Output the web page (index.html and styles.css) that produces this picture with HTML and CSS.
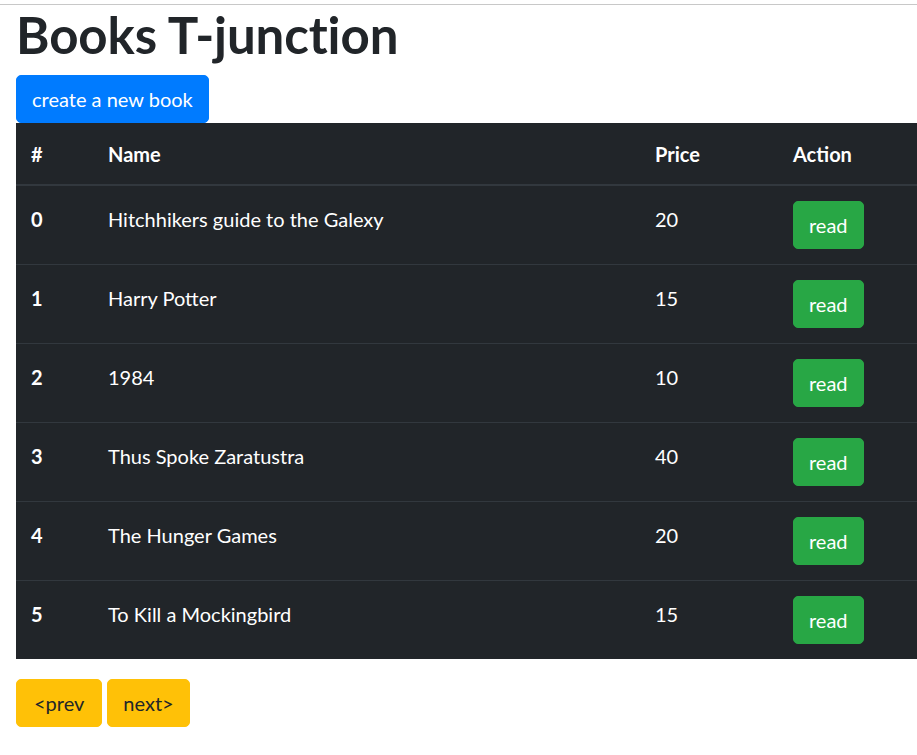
FILE: index.html
```html
<!DOCTYPE html>
<html lang="en">
<head>
<meta charset="utf-8">
<title>Books T-junction</title>
<link rel="stylesheet" href="styles.css">
</head>
<body>
<div class="topline"></div>
<div class="page">
  <h1 class="title">Books T-junction</h1>
  <button class="btn btn-primary">create a new book</button>
  <table class="books">
    <thead>
      <tr>
        <th class="c-id">#</th>
        <th class="c-name">Name</th>
        <th class="c-price">Price</th>
        <th class="c-action">Action</th>
      </tr>
    </thead>
    <tbody>
      <tr><th>0</th><td>Hitchhikers guide to the Galexy</td><td>20</td><td class="act"><button class="btn btn-success">read</button></td></tr>
      <tr><th>1</th><td>Harry Potter</td><td>15</td><td class="act"><button class="btn btn-success">read</button></td></tr>
      <tr><th>2</th><td>1984</td><td>10</td><td class="act"><button class="btn btn-success">read</button></td></tr>
      <tr><th>3</th><td>Thus Spoke Zaratustra</td><td>40</td><td class="act"><button class="btn btn-success">read</button></td></tr>
      <tr><th>4</th><td>The Hunger Games</td><td>20</td><td class="act"><button class="btn btn-success">read</button></td></tr>
      <tr><th>5</th><td>To Kill a Mockingbird</td><td>15</td><td class="act"><button class="btn btn-success">read</button></td></tr>
    </tbody>
  </table>
  <div class="pager">
    <button class="btn btn-warning">&lt;prev</button>
    <button class="btn btn-warning">next&gt;</button>
  </div>
</div>
</body>
</html>
```

FILE: styles.css
```css
html, body {
  margin: 0;
  padding: 0;
  background: #fff;
}
body {
  font-family: Lato, "Noto Sans", sans-serif;
  font-size: 20px;
  line-height: 1.5;
  color: #212529;
}
.topline {
  height: 4px;
  border-bottom: 1px solid #c8c8c8;
}
.page {
  padding-left: 16px;
}
.title {
  margin: 0 0 10px 0;
  font-size: 51px;
  font-weight: 700;
  line-height: 60px;
  letter-spacing: -0.1px;
}
.btn {
  display: inline-block;
  font-family: inherit;
  font-size: 20px;
  line-height: 30px;
  padding: 8px 15px;
  border: 1px solid transparent;
  border-radius: 5px;
  cursor: pointer;
  vertical-align: top;
}
.btn-primary {
  background: #007bff;
  border-color: #007bff;
  color: #fff;
}
.btn-success {
  background: #28a745;
  border-color: #28a745;
  color: #fff;
}
.btn-warning {
  background: #ffc107;
  border-color: #ffc107;
  color: #212529;
}
.books {
  width: 904px;
  border-collapse: collapse;
  background: #212529;
  color: #fff;
  margin-bottom: 20px;
}
.books th, .books td {
  padding: 18px 15px 12px 15px;
  text-align: left;
  vertical-align: top;
  border-top: 1px solid #32383e;
}
.books td.act {
  padding: 15px;
}
.books thead th {
  border-top: none;
  border-bottom: 2px solid #32383e;
  font-weight: 700;
  padding: 16px 15px 15px 15px;
}
.books tbody th {
  font-weight: 700;
}
.c-id { width: 47px; }
.c-name { width: 517px; }
.c-price { width: 108px; }
.pager {
  display: flex;
  gap: 5px;
}
.pager .btn:first-child {
  padding-left: 17px;
  padding-right: 17px;
}
.pager .btn:last-child {
  padding-left: 15px;
  padding-right: 15px;
}
```
